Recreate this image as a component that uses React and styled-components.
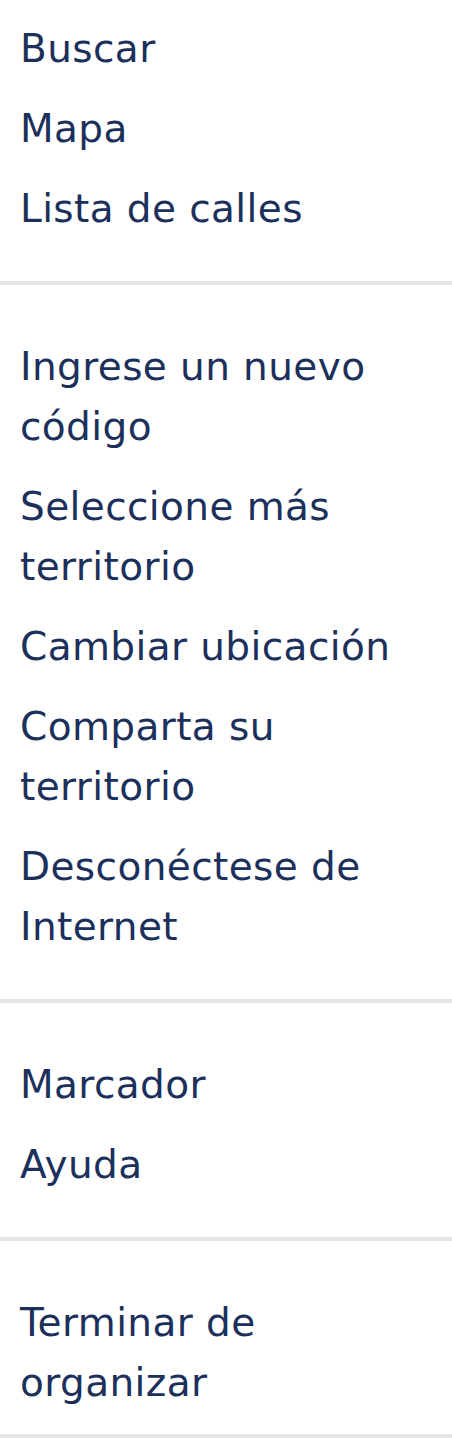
import React from 'react'
import styled, { createGlobalStyle } from 'styled-components'

const GlobalStyle = createGlobalStyle`
  html, body {
    margin: 0;
    padding: 0;
    background: #ffffff;
  }
  body {
    font-family: "DejaVu Sans", "Noto Sans", sans-serif;
    -webkit-font-smoothing: antialiased;
  }
`

const Menu = styled.nav`
  width: 452px;
  display: flex;
  flex-direction: column;
  background: #ffffff;
`

const Group = styled.ul`
  list-style: none;
  margin: 0;
  padding: ${({ $first, $last }) => `${$first ? 9 : 42}px 0 ${$last ? 11 : 32}px`};
  display: flex;
  flex-direction: column;
`

const Item = styled.li`
  padding: 10px 22px 10px 20px;
  font-size: 39px;
  letter-spacing: 0.4px;
  line-height: 60px;
  color: #1b305b;
  cursor: pointer;
`

const Divider = styled.hr`
  margin: 0;
  border: 0;
  height: 4px;
  background: #e5e5e5;
`

const groups = [
  ['Buscar', 'Mapa', 'Lista de calles'],
  [
    'Ingrese un nuevo código',
    'Seleccione más territorio',
    'Cambiar ubicación',
    'Comparta su territorio',
    'Desconéctese de Internet',
  ],
  ['Marcador', 'Ayuda'],
  ['Terminar de organizar'],
]

const App = () => (
  <>
    <GlobalStyle />
    <Menu>
      {groups.map((items, i) => (
        <React.Fragment key={i}>
          <Group $first={i === 0} $last={i === groups.length - 1}>
            {items.map(label => (
              <Item key={label}>{label}</Item>
            ))}
          </Group>
          <Divider />
        </React.Fragment>
      ))}
    </Menu>
  </>
)

export default App
